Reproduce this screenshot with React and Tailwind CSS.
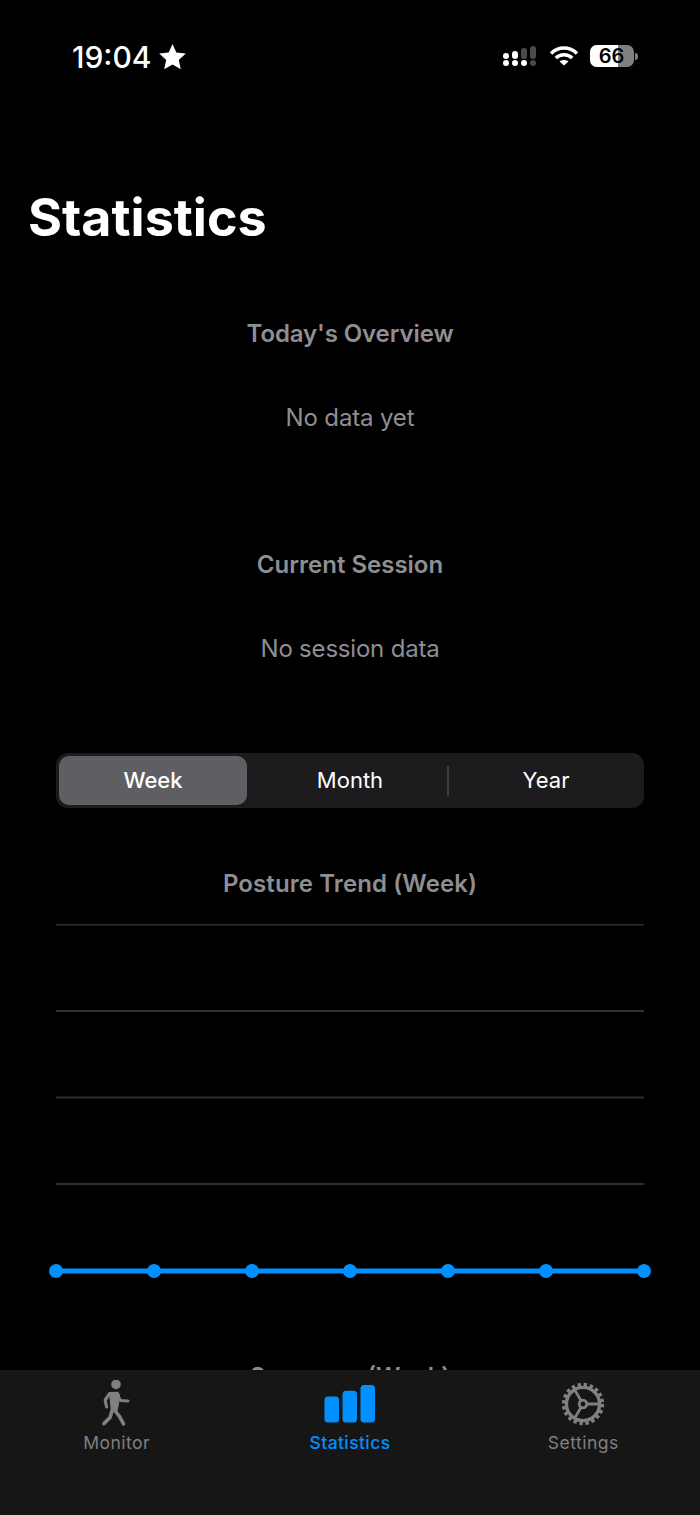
import React from "react";

const font = { fontFamily: "Inter, 'Liberation Sans', sans-serif" };
const blue = "#0090ff";

function Signal() {
  return (
    <svg width="36" height="20" viewBox="0 0 36 20" className="block">
      <rect x="1" y="7" width="6" height="6" rx="3" fill="#fff" />
      <rect x="10" y="5" width="6" height="8" rx="3" fill="#fff" />
      <rect x="19" y="2" width="6" height="11" rx="3" fill="#4a4a4a" />
      <rect x="28" y="0" width="6" height="13" rx="3" fill="#4a4a4a" />
      <circle cx="4" cy="17" r="3" fill="#fff" />
      <circle cx="13" cy="17" r="3" fill="#fff" />
      <circle cx="22" cy="17" r="3" fill="#fff" />
      <circle cx="31" cy="17" r="3" fill="#4a4a4a" />
    </svg>
  );
}

function Wifi() {
  return (
    <svg width="30" height="20" viewBox="0 0 30 20" className="block" fill="none" stroke="#fff" strokeWidth="3.4">
      <path d="M2 7.5 C9.5 0.2 20.5 0.2 28 7.5" />
      <path d="M6.8 12 C11.5 7.6 18.5 7.6 23.2 12" />
      <path d="M15 19.6 L10.6 15.6 C13 13.6 17 13.6 19.4 15.6 Z" fill="#fff" stroke="none" />
    </svg>
  );
}

function Battery() {
  return (
    <div className="flex items-center gap-[1.5px]">
      <div className="relative flex h-[22px] w-[44px] items-center justify-center overflow-hidden rounded-[7px] bg-[#808080]">
        <div className="absolute left-0 top-0 h-full w-[28px] bg-white" />
        <span className="relative text-[20px] font-semibold leading-none text-black">66</span>
      </div>
      <div className="h-[7px] w-[3px] rounded-r-[3px] bg-[#808080]" />
    </div>
  );
}

function Walk() {
  return (
    <svg width="34" height="48" viewBox="0 0 34 48" className="block" fill="none" stroke="#808080" strokeLinecap="round" strokeLinejoin="round">
      <circle cx="16" cy="4.4" r="4.8" fill="#808080" stroke="none" />
      <path d="M9.5 12.8 L17.5 12.5 L19.3 15 L19 20 L17 30 L11.5 31 L10.5 20 Z" fill="#808080" strokeWidth="1.5" />
      <path d="M9.5 13.6 L5.2 20 L6.6 27" strokeWidth="3.2" />
      <path d="M19.5 18.5 L21 20.6 L28 20.9" strokeWidth="3" />
      <path d="M14.5 30 L19.5 36.5 L23.5 43.8" strokeWidth="3.6" />
      <path d="M12 31 L10 37.5 L4 43.6" strokeWidth="3.6" />
    </svg>
  );
}

function Bars() {
  return (
    <svg width="52" height="38" viewBox="0 0 52 38" className="block" fill={blue}>
      <rect x="0.5" y="11.5" width="14.5" height="26" rx="3.5" />
      <rect x="18.5" y="5.8" width="14.5" height="31.7" rx="3.5" />
      <rect x="36.5" y="0" width="14.5" height="37.5" rx="3.5" />
    </svg>
  );
}

function Gear() {
  return (
    <svg width="44" height="44" viewBox="0 0 44 44" className="block" fill="none" stroke="#808080">
      <circle cx="22" cy="22" r="16.6" strokeWidth="3.4" />
      <circle cx="22" cy="22" r="19.4" strokeWidth="3.6" strokeDasharray="3.4 2.7" />
      <circle cx="22" cy="22" r="3.8" strokeWidth="2.8" />
      <path d="M25.8 22 H38 M20.1 18.7 L13.5 7.6 M20.1 25.3 L13.5 36.4" strokeWidth="2.8" />
    </svg>
  );
}

function Chart() {
  const gridY = [0.5, 87, 173.5, 260];
  const xs = [8, 106, 204, 302, 400, 498, 596];
  return (
    <svg width="604" height="366" viewBox="0 0 604 366" className="block">
      {gridY.map((y) => (
        <line key={y} x1="8" x2="596" y1={y} y2={y} stroke="#2f2f2f" strokeWidth="2" />
      ))}
      <line x1="8" x2="596" y1="347" y2="347" stroke={blue} strokeWidth="5" />
      {xs.map((x) => (
        <circle key={x} cx={x} cy="347" r="7" fill={blue} />
      ))}
    </svg>
  );
}

function Tab({ label, active, icon, iconBox }) {
  return (
    <div className="flex flex-1 flex-col items-center">
      <div className={iconBox}>{icon}</div>
      <span className={`text-[17.5px] leading-[20px] ${active ? "tracking-[0.4px] font-medium text-[#0090ff]" : "tracking-[0.5px] text-[#808080]"}`}>
        {label}
      </span>
    </div>
  );
}

export default function App() {
  return (
    <div className="relative h-[1515px] w-[700px] overflow-hidden bg-black text-white" style={font}>
      <div className="flex h-[112px] items-start justify-between pl-[72px] pr-[62px] pt-[40px]">
        <div className="flex items-center gap-[6px]">
          <span className="text-[30px] font-medium leading-[34px]">19:04</span>
          <svg width="29" height="28" viewBox="0 0 24 24" fill="#fff" className="block">
            <path d="M12 0.8 L15.3 8.2 L23.4 9.1 L17.4 14.5 L19.1 22.5 L12 18.4 L4.9 22.5 L6.6 14.5 L0.6 9.1 L8.7 8.2 Z" />
          </svg>
        </div>
        <div className="flex items-center gap-[11px] pt-[5px]">
          <Signal />
          <Wifi />
          <Battery />
        </div>
      </div>

      <h1 className="pl-[28px] pt-[71px] text-[52px] font-bold leading-[70px]">Statistics</h1>

      <section className="mt-[65px] flex flex-col items-center text-[#8e8e93]">
        <h2 className="text-[24px] font-semibold leading-[32px] tracking-[-0.1px]">Today's Overview</h2>
        <p className="mt-[52px] text-[24px] leading-[32px] tracking-[-0.15px]">No data yet</p>
        <h2 className="mt-[115px] text-[24px] font-semibold leading-[32px]">Current Session</h2>
        <p className="mt-[52px] text-[24px] leading-[32px] tracking-[-0.2px]">No session data</p>
      </section>

      <div className="mx-[56px] mt-[88px] grid h-[55px] grid-cols-3 items-center rounded-[12px] bg-[#1c1c1e] text-[22px]">
        <div className="ml-[3px] mr-[5px] flex h-[49px] items-center justify-center rounded-[10px] bg-[#5f5f63] font-medium">Week</div>
        <div className="relative flex h-full items-center justify-center">
          Month
          <div className="absolute -right-[1px] top-[13px] h-[30px] w-[2px] bg-[#3e3e40]" />
        </div>
        <div className="flex h-full items-center justify-center">Year</div>
      </div>

      <h2 className="mt-[60px] text-center text-[24px] font-semibold leading-[32px] tracking-[0.1px] text-[#8e8e93]">Posture Trend (Week)</h2>
      <div className="ml-[48px] mt-[24px]">
        <Chart />
      </div>
      <h2 className="mt-[71px] text-center text-[24px] font-semibold leading-[32px] text-[#8e8e93]">Summary (Week)</h2>

      <nav className="absolute bottom-0 left-0 right-0 flex h-[145px] bg-[#161616] pt-[10px]">
        <Tab label="Monitor" icon={<Walk />} iconBox="h-[53px]" />
        <Tab label="Statistics" active icon={<Bars />} iconBox="h-[53px] pt-[5px]" />
        <Tab label="Settings" icon={<Gear />} iconBox="h-[53px] pt-[2px]" />
      </nav>
    </div>
  );
}
